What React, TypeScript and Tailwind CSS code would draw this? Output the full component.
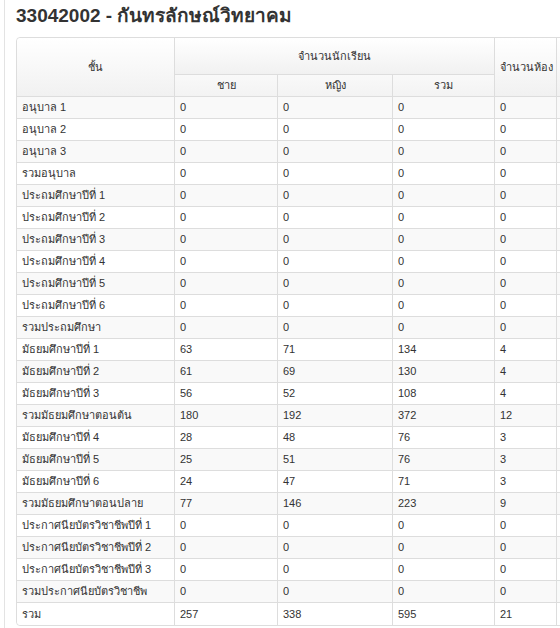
const rows: [string, string, string, string, string][] = [
  ['อนุบาล 1', '0', '0', '0', '0'],
  ['อนุบาล 2', '0', '0', '0', '0'],
  ['อนุบาล 3', '0', '0', '0', '0'],
  ['รวมอนุบาล', '0', '0', '0', '0'],
  ['ประถมศึกษาปีที่ 1', '0', '0', '0', '0'],
  ['ประถมศึกษาปีที่ 2', '0', '0', '0', '0'],
  ['ประถมศึกษาปีที่ 3', '0', '0', '0', '0'],
  ['ประถมศึกษาปีที่ 4', '0', '0', '0', '0'],
  ['ประถมศึกษาปีที่ 5', '0', '0', '0', '0'],
  ['ประถมศึกษาปีที่ 6', '0', '0', '0', '0'],
  ['รวมประถมศึกษา', '0', '0', '0', '0'],
  ['มัธยมศึกษาปีที่ 1', '63', '71', '134', '4'],
  ['มัธยมศึกษาปีที่ 2', '61', '69', '130', '4'],
  ['มัธยมศึกษาปีที่ 3', '56', '52', '108', '4'],
  ['รวมมัธยมศึกษาตอนต้น', '180', '192', '372', '12'],
  ['มัธยมศึกษาปีที่ 4', '28', '48', '76', '3'],
  ['มัธยมศึกษาปีที่ 5', '25', '51', '76', '3'],
  ['มัธยมศึกษาปีที่ 6', '24', '47', '71', '3'],
  ['รวมมัธยมศึกษาตอนปลาย', '77', '146', '223', '9'],
  ['ประกาศนียบัตรวิชาชีพปีที่ 1', '0', '0', '0', '0'],
  ['ประกาศนียบัตรวิชาชีพปีที่ 2', '0', '0', '0', '0'],
  ['ประกาศนียบัตรวิชาชีพปีที่ 3', '0', '0', '0', '0'],
  ['รวมประกาศนียบัตรวิชาชีพ', '0', '0', '0', '0'],
  ['รวม', '257', '338', '595', '21'],
];

// header cells: soft white-to-grey gradient, regular weight
const th =
  'border border-[#dddddd] border-t-0 border-l-0 bg-gradient-to-b font-normal text-center align-middle px-[5px] py-0';
const thTall = th + ' from-white to-[#f1f1f1]';
const thLow = th + ' from-[#f9f9f9] to-[#f3f3f3]';
const td = 'border border-[#dddddd] border-t-0 border-l-0 px-[5px] py-0 h-[22px] text-left align-middle';

const App = () => {
  return (
    <div className="w-[560px] h-[628px] overflow-hidden bg-white text-[#333333] font-['Liberation_Sans',Tahoma,sans-serif]">
      <div className="ml-[4px] border-l border-[#e3e3e3] pl-[11px] min-h-[628px]">
        <h1 className="pt-[5px] h-[37px] text-[19px] leading-[22px] font-bold text-[#333333] whitespace-nowrap">
          33042002 - กันทรลักษณ์วิทยาคม
        </h1>
        <div className="w-[620px]">
          <table className="border-separate border-spacing-0 text-[11px] leading-[21px] w-[620px] table-fixed border border-[#dddddd] rounded-[4px]">
            <colgroup>
              <col className="w-[158px]" />
              <col className="w-[103px]" />
              <col className="w-[115px]" />
              <col className="w-[102px]" />
              <col className="w-[62px]" />
              <col className="w-[80px]" />
            </colgroup>
            <thead>
              <tr className="h-[37px]">
                <th rowSpan={2} className={thTall + ' rounded-tl-[4px]'}>
                  ชั้น
                </th>
                <th colSpan={3} className={thTall}>
                  จำนวนนักเรียน
                </th>
                <th rowSpan={2} className={thTall + ' text-left px-[3px] whitespace-nowrap'}>
                  จำนวนห้อง
                </th>
                <th rowSpan={2} className={thTall + ' border-r-0'}></th>
              </tr>
              <tr className="h-[22px]">
                <th className={thLow}>ชาย</th>
                <th className={thLow}>หญิง</th>
                <th className={thLow}>รวม</th>
              </tr>
            </thead>
            <tbody>
              {rows.map((r, i) => {
                const last = i === rows.length - 1;
                return (
                  <tr key={r[0]} className={i % 2 === 0 ? 'bg-[#f9f9f9]' : 'bg-white'}>
                    {r.map((c, j) => (
                      <td
                        key={j}
                        className={
                          td +
                          (last ? ' border-b-0' : '') +
                          (j === 0 && last ? ' rounded-bl-[4px]' : '') +
                          (j === 0 ? ' px-[4px] whitespace-nowrap' : '')
                        }
                      >
                        {c}
                      </td>
                    ))}
                    <td className={td + ' border-r-0' + (last ? ' border-b-0' : '')}></td>
                  </tr>
                );
              })}
            </tbody>
          </table>
        </div>
      </div>
    </div>
  );
};

export default App;
